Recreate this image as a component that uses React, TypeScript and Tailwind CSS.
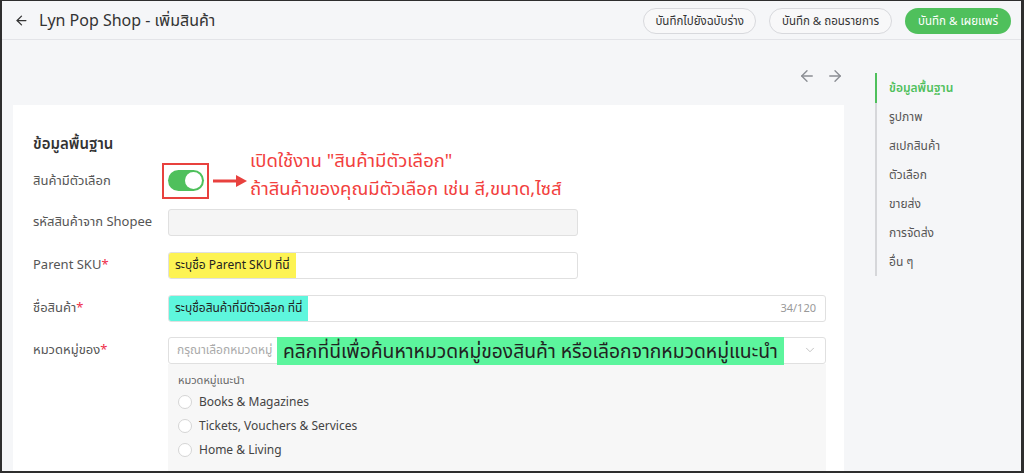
import { ArrowLeft, ArrowRight, ChevronDown } from 'lucide-react';

const navItems = ['ข้อมูลพื้นฐาน', 'รูปภาพ', 'สเปกสินค้า', 'ตัวเลือก', 'ขายส่ง', 'การจัดส่ง', 'อื่น ๆ'];
const suggested = ['Books & Magazines', 'Tickets, Vouchers & Services', 'Home & Living'];

function Label({ text, required }: { text: string; required?: boolean }) {
  return (
    <div className="w-[135px] shrink-0 text-[13px] text-[#555]">
      {text}
      {required && <span className="text-[#ee2c4a]">*</span>}
    </div>
  );
}

export default function App() {
  return (
    <div
      className="w-[1024px] h-[473px] overflow-hidden border-l-2 border-t border-r-[3px] border-b-2 border-[#2e2e2e] bg-[#f5f6f8] flex flex-col"
      style={{ fontFamily: '"Noto Sans", "Noto Sans Thai", "Open Sans", sans-serif' }}
    >
      <header className="h-[39px] shrink-0 flex items-center justify-between border-b border-[#e3e4e8] pl-3 pr-[10px]">
        <div className="flex items-center gap-[10px] text-[#333]">
          <ArrowLeft size={15} strokeWidth={2} />
          <span className="text-[16px] leading-none">Lyn Pop Shop - เพิ่มสินค้า</span>
        </div>
        <div className="flex items-center gap-[13px] pt-[1px]">
          <button className="h-[26px] px-[11px] rounded-full border border-[#d8d9dd] bg-[#f8f8f9] text-[11.5px] text-[#333]">บันทึกไปยังฉบับร่าง</button>
          <button className="h-[26px] px-[12px] rounded-full border border-[#d8d9dd] bg-[#f8f8f9] text-[11.5px] text-[#333]">บันทึก &amp; ถอนรายการ</button>
          <button className="h-[26px] px-[13px] rounded-full bg-[#4fc05c] text-[11.5px] text-white">บันทึก &amp; เผยแพร่</button>
        </div>
      </header>

      <div className="flex flex-1 min-h-0">
        <main className="w-[842px] shrink-0 pl-[11px] flex flex-col">
          <div className="h-[65px] shrink-0 flex items-start justify-end gap-[10px] pt-[27px] text-[#8a8d93]">
            <ArrowLeft size={18} strokeWidth={1.8} />
            <ArrowRight size={18} strokeWidth={1.8} />
          </div>
          <section className="flex-1 bg-white pl-5 pr-[18px] pt-[27px]">
            <h2 className="text-[15px] font-semibold text-[#333] mb-[8px]">ข้อมูลพื้นฐาน</h2>

            <div className="flex items-center h-[36px]">
              <Label text="สินค้ามีตัวเลือก" />
              <div className="relative flex items-center">
                <div className="w-[47px] h-[36px] -ml-[6px] border-2 border-[#e8413e] flex items-center justify-center">
                  <div className="w-[36px] h-[21px] rounded-full bg-[#4fc05c] relative">
                    <div className="absolute right-[2px] top-[2px] w-[17px] h-[17px] rounded-full bg-white" />
                  </div>
                </div>
                <svg width="36" height="14" viewBox="0 0 36 14" className="ml-[3px]">
                  <line x1="1" y1="7" x2="26" y2="7" stroke="#e8413e" strokeWidth="3" />
                  <polygon points="24,1 35,7 24,13" fill="#e8413e" />
                </svg>
                <div className="absolute left-[82px] -top-[17px] whitespace-nowrap text-[18.5px] leading-[28px] text-[#f2403d]">
                  <div>เปิดใช้งาน "สินค้ามีตัวเลือก"</div>
                  <div>ถ้าสินค้าของคุณมีตัวเลือก เช่น สี,ขนาด,ไซส์</div>
                </div>
              </div>
            </div>

            <div className="flex items-center mt-[10px]">
              <Label text="รหัสสินค้าจาก Shopee" />
              <div className="w-[410px] h-[27px] rounded-[3px] border border-[#e0e0e0] bg-[#f5f5f5]" />
            </div>

            <div className="flex items-center mt-[16px]">
              <Label text="Parent SKU" required />
              <div className="w-[410px] h-[27px] rounded-[3px] border border-[#e0e0e0] bg-white flex items-stretch overflow-hidden">
                <span className="bg-[#fdf353] px-[6px] flex items-center text-[12px] text-[#222]">ระบุชื่อ Parent SKU ที่นี่</span>
              </div>
            </div>

            <div className="flex items-center mt-[16px]">
              <Label text="ชื่อสินค้า" required />
              <div className="flex-1 h-[27px] rounded-[3px] border border-[#e0e0e0] bg-white flex items-stretch overflow-hidden">
                <span className="bg-[#5ef6dd] px-[6px] flex items-center text-[12px] text-[#222]">ระบุชื่อสินค้าที่มีตัวเลือก ที่นี่</span>
                <span className="ml-auto pr-[9px] flex items-center text-[11px] text-[#999]">34/120</span>
              </div>
            </div>

            <div className="flex items-center mt-[15px]">
              <Label text="หมวดหมู่ของ" required />
              <div className="flex-1 h-[27px] rounded-[3px] border border-[#e0e0e0] bg-white flex items-center">
                <span className="pl-[8px] w-[108px] text-[12px] text-[#aaa] whitespace-nowrap">กรุณาเลือกหมวดหมู่</span>
                <span className="bg-[#5cf59d] h-[28px] -mb-[2px] px-[6px] flex items-center text-[19.3px] text-[#222] whitespace-nowrap">คลิกที่นี่เพื่อค้นหาหมวดหมู่ของสินค้า หรือเลือกจากหมวดหมู่แนะนำ</span>
                <ChevronDown size={14} strokeWidth={1.5} className="ml-auto mr-[8px] text-[#bbb]" />
              </div>
            </div>

            <div className="ml-[135px] bg-[#f7f7f7] pl-[10px] pt-[8px] pb-3">
              <div className="text-[11px] text-[#666] mb-[5px]">หมวดหมู่แนะนำ</div>
              <div className="flex flex-col gap-[6px]">
                {suggested.map((s) => (
                  <div key={s} className="flex items-center gap-[7px] h-[18px]">
                    <span className="w-[14px] h-[14px] rounded-full border border-[#d5d5d5] bg-white" />
                    <span className="text-[12px] text-[#444]">{s}</span>
                  </div>
                ))}
              </div>
            </div>
          </section>
        </main>

        <aside className="flex-1 pl-[31px] pt-[33px]">
          <div className="relative border-l-2 border-[#d6d7da] h-[203px] pl-[12px]">
            <div className="absolute -left-[2px] top-0 w-[2px] h-[30px] bg-[#4fc05c]" />
            {navItems.map((item, i) => (
              <div
                key={item}
                className={`h-[29px] flex items-center text-[12px] ${i === 0 ? 'text-[#4fc05c] font-semibold' : 'text-[#555]'}`}
              >
                {item}
              </div>
            ))}
          </div>
        </aside>
      </div>
    </div>
  );
}
